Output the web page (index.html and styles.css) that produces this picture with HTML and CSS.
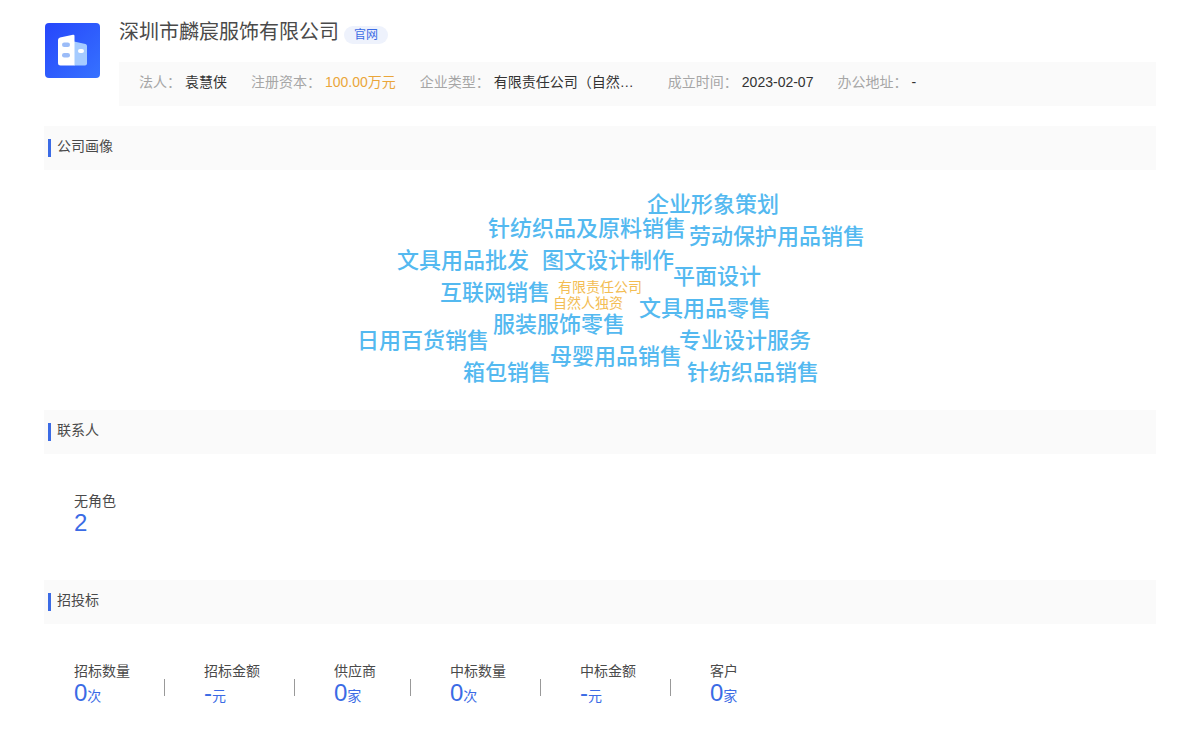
FILE: index.html
```html
<!DOCTYPE html>
<html lang="zh-CN">
<head>
<meta charset="utf-8">
<meta name="viewport" content="width=device-width, initial-scale=1">
<title>深圳市麟宸服饰有限公司</title>
<link rel="stylesheet" href="styles.css">
</head>
<body>
<main class="page">
  <header class="company">
    <svg class="logo" viewBox="0 0 55 55" aria-hidden="true">
      <defs>
        <linearGradient id="logo-bg" x1="0" y1="0" x2="1" y2="1">
          <stop offset="0" stop-color="#2646fb"/>
          <stop offset="1" stop-color="#3672ff"/>
        </linearGradient>
      </defs>
      <rect width="55" height="55" rx="4" fill="url(#logo-bg)"/>
      <path d="M29 18.500 40.500 21Q42 21.500 42 23V40.500Q42 42.500 40 42.500H29Z" fill="#a5cbff"/>
      <path d="M15 14.500 28 11.800Q29.500 11.500 29.500 13V42.500H15.500Q13 42.500 13 40V17Q13 15 15 14.500Z" fill="#fff"/>
      <rect x="17" y="19.500" width="8" height="4.500" rx="2.200" fill="#9bbcf8"/>
      <rect x="17" y="30" width="8" height="4.500" rx="2.200" fill="#9bbcf8"/>
      <rect x="33" y="26" width="6" height="4" rx="2" fill="#fff"/>
    </svg>
    <div class="company-main">
      <div class="title-row">
        <h1 class="name">深圳市麟宸服饰有限公司</h1>
        <a class="site-link" href="#">官网</a>
      </div>
      <dl class="facts">
        <div class="fact"><dt>法人：</dt><dd>袁慧侠</dd></div>
        <div class="fact"><dt>注册资本：</dt><dd class="money">100.00万元</dd></div>
        <div class="fact"><dt>企业类型：</dt><dd class="wide">有限责任公司（自然…</dd></div>
        <div class="fact"><dt>成立时间：</dt><dd>2023-02-07</dd></div>
        <div class="fact"><dt>办公地址：</dt><dd>-</dd></div>
      </dl>
    </div>
  </header>

  <section>
    <h2 class="section-title">公司画像</h2>
    <div class="cloud">
      <div class="cloud-canvas">
        <span class="word" style="left:297px;top:19px">企业形象策划</span>
        <span class="word" style="left:138px;top:43px">针纺织品及原料销售</span>
        <span class="word" style="left:339px;top:51px">劳动保护用品销售</span>
        <span class="word" style="left:47px;top:75px">文具用品批发</span>
        <span class="word" style="left:192px;top:75px">图文设计制作</span>
        <span class="word" style="left:323px;top:91px">平面设计</span>
        <span class="word" style="left:90px;top:107px">互联网销售</span>
        <span class="word word-small" style="left:208px;top:107px">有限责任公司</span>
        <span class="word word-small" style="left:203px;top:123px">自然人独资</span>
        <span class="word" style="left:289px;top:123px">文具用品零售</span>
        <span class="word" style="left:143px;top:139px">服装服饰零售</span>
        <span class="word" style="left:7px;top:155px">日用百货销售</span>
        <span class="word" style="left:329px;top:155px">专业设计服务</span>
        <span class="word" style="left:200px;top:171px">母婴用品销售</span>
        <span class="word" style="left:113px;top:187px">箱包销售</span>
        <span class="word" style="left:337px;top:187px">针纺织品销售</span>
      </div>
    </div>
  </section>

  <section>
    <h2 class="section-title">联系人</h2>
    <dl class="stats">
      <div class="stat"><dt>无角色</dt><dd>2</dd></div>
    </dl>
  </section>

  <section>
    <h2 class="section-title">招投标</h2>
    <dl class="stats">
      <div class="stat"><dt>招标数量</dt><dd>0<small>次</small></dd></div>
      <div class="stat"><dt>招标金额</dt><dd>-<small>元</small></dd></div>
      <div class="stat"><dt>供应商</dt><dd>0<small>家</small></dd></div>
      <div class="stat"><dt>中标数量</dt><dd>0<small>次</small></dd></div>
      <div class="stat"><dt>中标金额</dt><dd>-<small>元</small></dd></div>
      <div class="stat"><dt>客户</dt><dd>0<small>家</small></dd></div>
    </dl>
  </section>
</main>
</body>
</html>
```
FILE: styles.css
```css
* {
  box-sizing: border-box;
}

body,
h1,
h2,
dl,
dd {
  margin: 0;
}

body {
  background: #fff;
  color: #4a4a4a;
  font: 14px/20px "Liberation Sans", "Noto Sans CJK SC", sans-serif;
}

.page {
  padding: 17px 44px 0;
}

.company {
  display: flex;
  gap: 19px;
  margin-bottom: 20px;
}

.logo {
  flex: none;
  width: 55px;
  height: 55px;
  margin: 6px 0 0 1px;
}

.company-main {
  flex: 1;
  min-width: 0;
}

.title-row {
  display: flex;
  align-items: flex-start;
  gap: 5px;
  margin-bottom: 15px;
}

.name {
  font-size: 20px;
  font-weight: 400;
  line-height: 30px;
}

.site-link {
  margin-top: 9px;
  padding: 0 10px;
  border-radius: 9px;
  background: #eef2fc;
  color: #3b6be5;
  font-size: 12px;
  line-height: 18px;
  text-decoration: none;
}

.facts {
  display: flex;
  gap: 24px;
  padding: 10px 20px 14px;
  background: #fafafa;
}

.fact {
  display: flex;
  gap: 4px;
  white-space: nowrap;
}

.fact dt {
  color: #a6a6a6;
}

.fact dd {
  color: #333;
}

.fact .money {
  color: #eaa63a;
}

.fact .wide {
  min-width: 150px;
}

.section-title {
  display: flex;
  align-items: center;
  gap: 6px;
  height: 44px;
  padding: 0 4px 4px;
  background: #fafafa;
  font-size: 14px;
  font-weight: 400;
}

.section-title::before {
  content: "";
  width: 3px;
  height: 18px;
  margin-top: 4px;
  background: #3b6be5;
}

.cloud {
  display: flex;
  justify-content: center;
  height: 240px;
}

.cloud-canvas {
  position: relative;
  width: 500px;
}

.word {
  position: absolute;
  color: #54b9f0;
  font-size: 22px;
  font-weight: 500;
  line-height: 32px;
  white-space: nowrap;
}

.word-small {
  color: #f3bd54;
  font-size: 14px;
  font-weight: 400;
  line-height: 20px;
}

.stats {
  display: flex;
  padding: 37px 30px 46px;
}

.stat {
  display: flex;
  flex-direction: column;
  position: relative;
}

.stat + .stat {
  margin-left: 34px;
  padding-left: 40px;
}

.stat + .stat::before {
  content: "";
  position: absolute;
  left: 0;
  top: 18px;
  width: 1px;
  height: 17px;
  background: #999;
}

.stat dd {
  color: #3b6be5;
  font-size: 24px;
  line-height: 23px;
}

.stat small {
  font-size: 14px;
}
```
